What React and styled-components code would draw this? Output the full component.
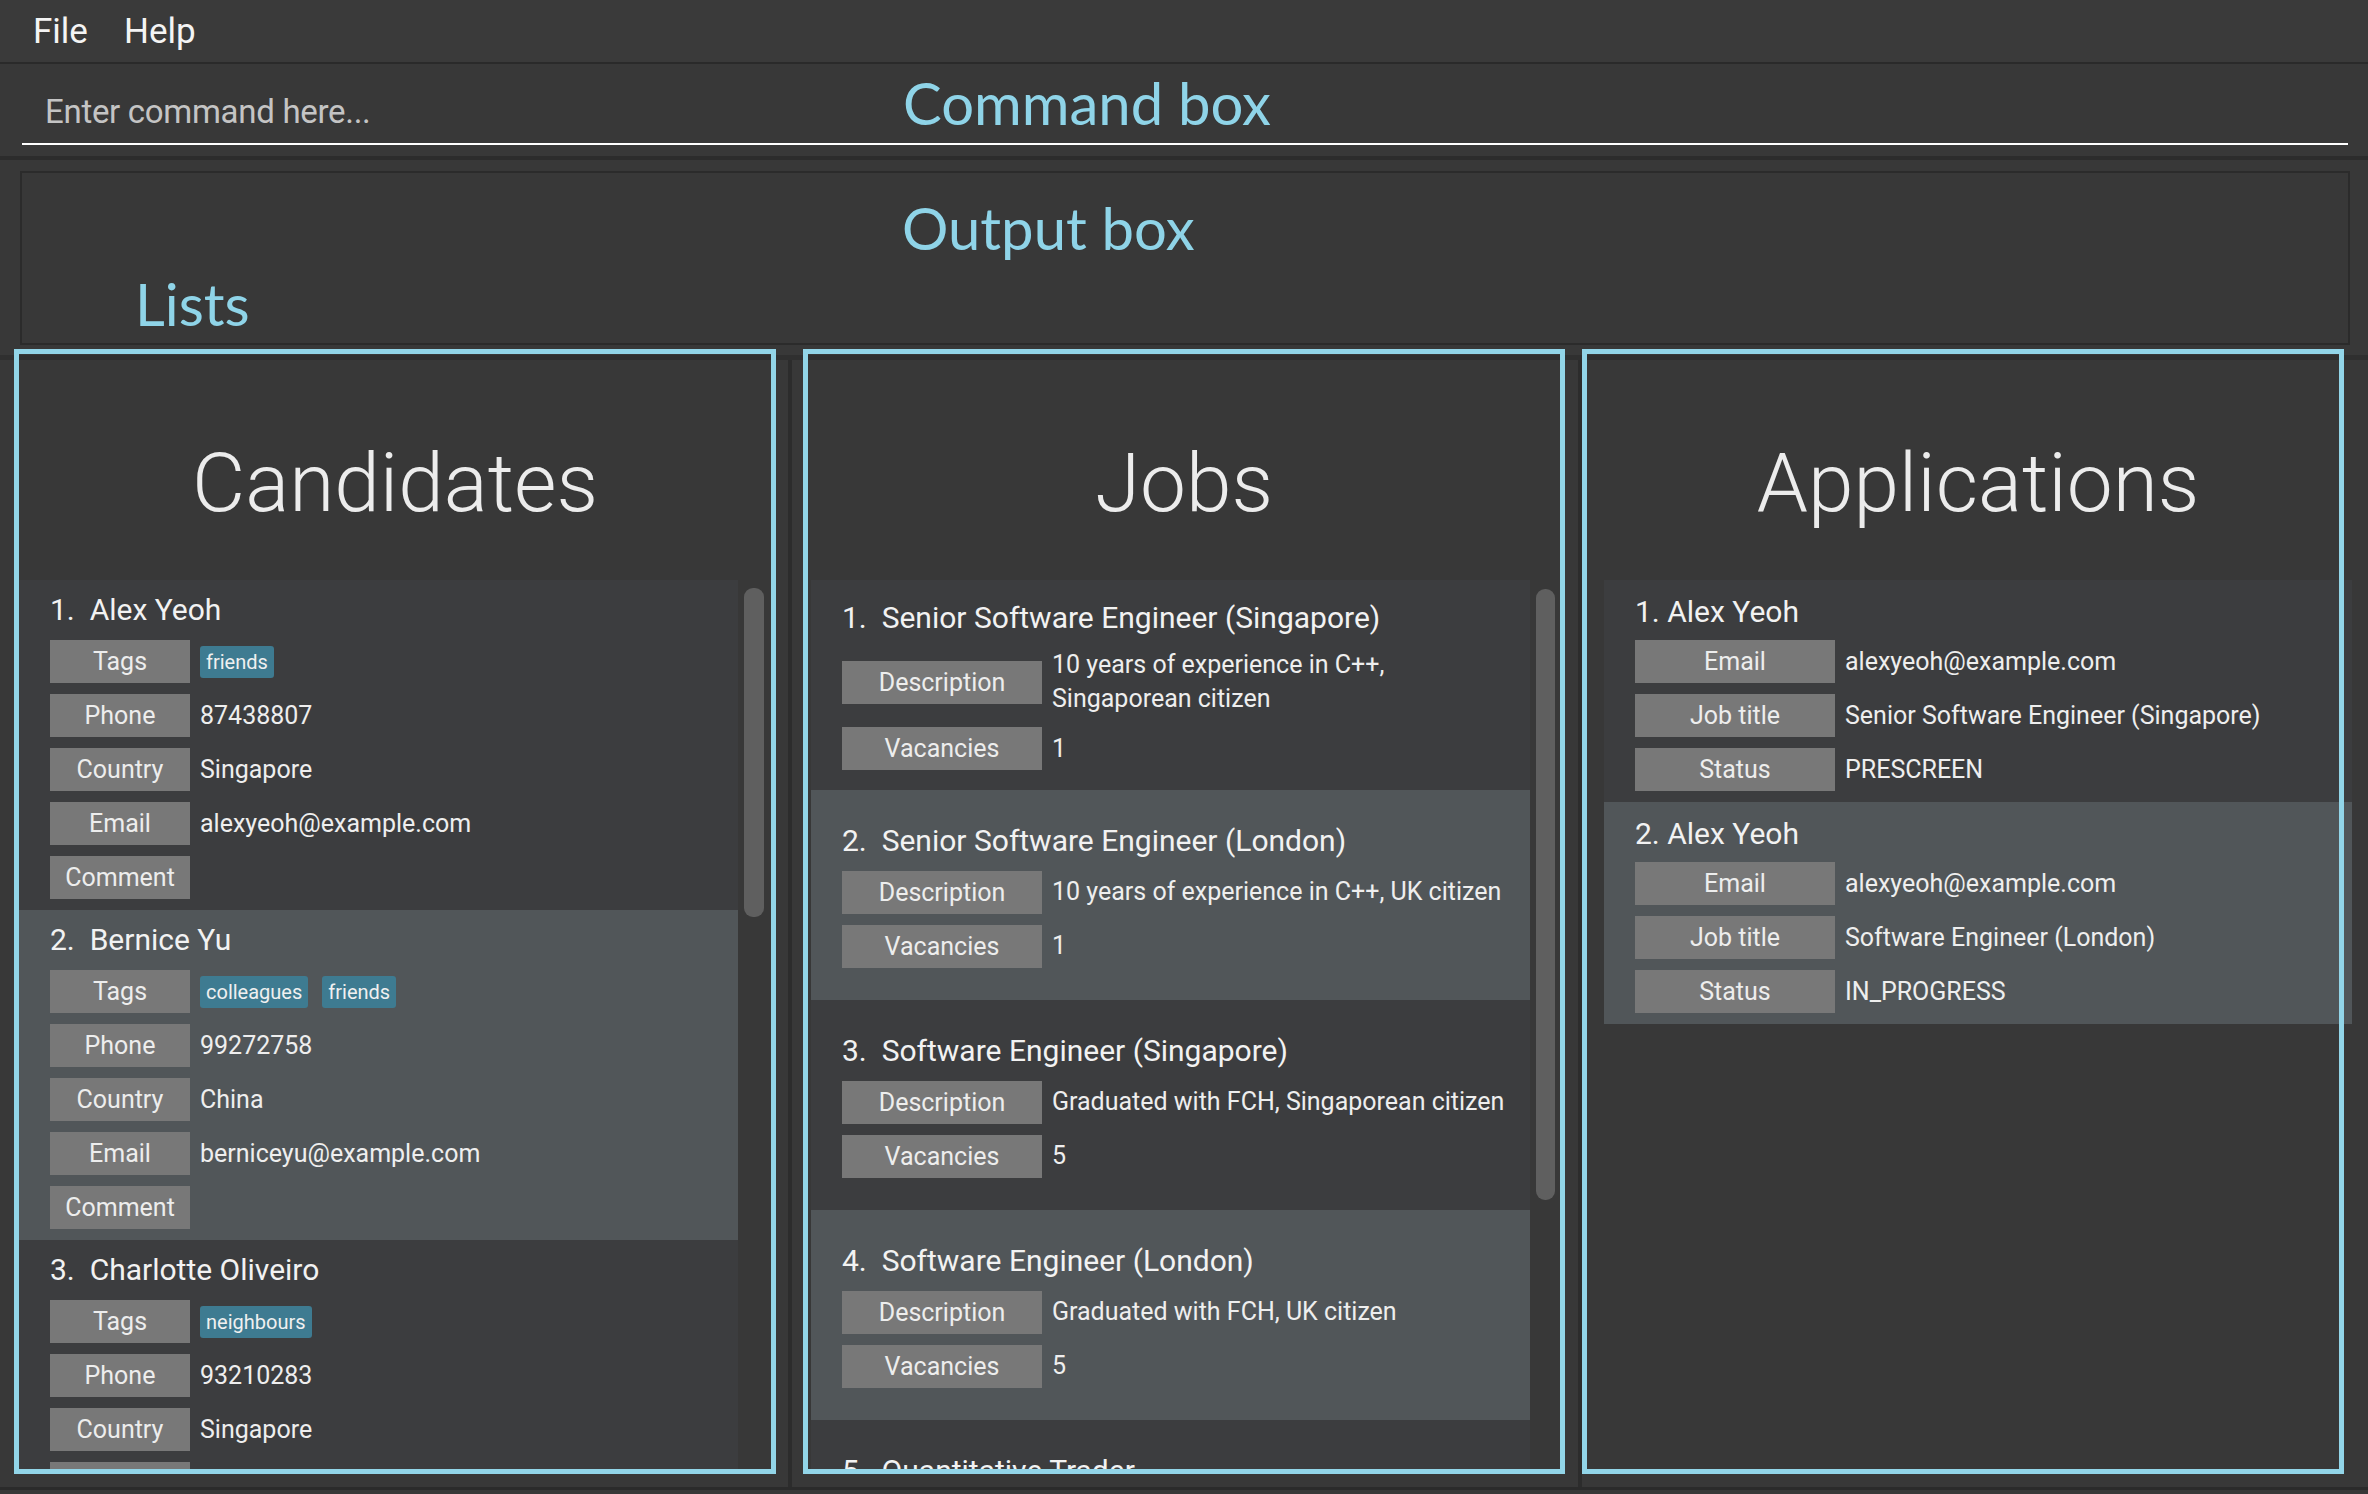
import React from 'react';
import styled, { createGlobalStyle } from 'styled-components';

const GlobalStyle = createGlobalStyle`
  html, body {
    margin: 0;
    padding: 0;
    background: #383838;
  }
  body {
    font-family: Roboto, "Liberation Sans", sans-serif;
    overflow: hidden;
  }
  * {
    box-sizing: border-box;
  }
`;

const candidates = [
  {
    name: 'Alex Yeoh',
    tags: ['friends'],
    phone: '87438807',
    country: 'Singapore',
    email: 'alexyeoh@example.com',
  },
  {
    name: 'Bernice Yu',
    tags: ['colleagues', 'friends'],
    phone: '99272758',
    country: 'China',
    email: 'berniceyu@example.com',
  },
  {
    name: 'Charlotte Oliveiro',
    tags: ['neighbours'],
    phone: '93210283',
    country: 'Singapore',
    email: 'charlotte@example.com',
  },
];

const jobs = [
  {
    title: 'Senior Software Engineer (Singapore)',
    description: '10 years of experience in C++, Singaporean citizen',
    vacancies: 1,
  },
  {
    title: 'Senior Software Engineer (London)',
    description: '10 years of experience in C++, UK citizen',
    vacancies: 1,
  },
  {
    title: 'Software Engineer (Singapore)',
    description: 'Graduated with FCH, Singaporean citizen',
    vacancies: 5,
  },
  {
    title: 'Software Engineer (London)',
    description: 'Graduated with FCH, UK citizen',
    vacancies: 5,
  },
  {
    title: 'Quantitative Trader',
    description: 'Strong mathematics background',
    vacancies: 2,
  },
];

const applications = [
  {
    name: 'Alex Yeoh',
    email: 'alexyeoh@example.com',
    job: 'Senior Software Engineer (Singapore)',
    status: 'PRESCREEN',
  },
  {
    name: 'Alex Yeoh',
    email: 'alexyeoh@example.com',
    job: 'Software Engineer (London)',
    status: 'IN_PROGRESS',
  },
];

const App = () => {
  return (
    <Window>
      <GlobalStyle />

      <MenuBar>
        <MenuItem>File</MenuItem>
        <MenuItem>Help</MenuItem>
      </MenuBar>

      <CommandBar>
        <CommandInput placeholder='Enter command here...' />
      </CommandBar>

      <OutputArea>
        <OutputBox />
      </OutputArea>

      <PanelsArea>
        <Panel>
          <PanelTitle>Candidates</PanelTitle>
          <ListArea>
            <Cells $width={719}>
              {candidates.map((c, i) => (
                <PersonCell key={c.name} $alt={i % 2 === 1}>
                  <Name>{`${i + 1}.  ${c.name}`}</Name>
                  <Rows>
                    <Row>
                      <Label $width={140}>Tags</Label>
                      <TagList>
                        {c.tags.map((t) => (
                          <Tag key={t}>{t}</Tag>
                        ))}
                      </TagList>
                    </Row>
                    <Row>
                      <Label $width={140}>Phone</Label>
                      <Value>{c.phone}</Value>
                    </Row>
                    <Row>
                      <Label $width={140}>Country</Label>
                      <Value>{c.country}</Value>
                    </Row>
                    <Row>
                      <Label $width={140}>Email</Label>
                      <Value>{c.email}</Value>
                    </Row>
                    <Row>
                      <Label $width={140}>Comment</Label>
                    </Row>
                  </Rows>
                </PersonCell>
              ))}
            </Cells>
            <ScrollGutter>
              <Thumb $top={8} $height={329} $width={20} />
            </ScrollGutter>
          </ListArea>
        </Panel>

        <Divider $left={12} $right={11} />

        <Panel>
          <PanelTitle>Jobs</PanelTitle>
          <ListArea $inset={3}>
            <Cells $width={719}>
              {jobs.map((j, i) => (
                <JobCell key={j.title} $alt={i % 2 === 1}>
                  <Name>{`${i + 1}.  ${j.title}`}</Name>
                  <Rows>
                    <Row>
                      <Label $width={200}>Description</Label>
                      <Value>{j.description}</Value>
                    </Row>
                    <Row>
                      <Label $width={200}>Vacancies</Label>
                      <Value>{j.vacancies}</Value>
                    </Row>
                  </Rows>
                </JobCell>
              ))}
            </Cells>
            <ScrollGutter>
              <Thumb $top={9} $height={611} $width={19} />
            </ScrollGutter>
          </ListArea>
        </Panel>

        <Divider $left={13} $right={0} />

        <Panel>
          <PanelTitle $shift={30}>Applications</PanelTitle>
          <ListArea $inset={17} $overhang={13}>
            <Cells>
              {applications.map((a, i) => (
                <AppCell key={a.status} $alt={i % 2 === 1}>
                  <Name>{`${i + 1}. ${a.name}`}</Name>
                  <Rows>
                    <Row>
                      <Label $width={200}>Email</Label>
                      <Value>{a.email}</Value>
                    </Row>
                    <Row>
                      <Label $width={200}>Job title</Label>
                      <Value>{a.job}</Value>
                    </Row>
                    <Row>
                      <Label $width={200}>Status</Label>
                      <Value>{a.status}</Value>
                    </Row>
                  </Rows>
                </AppCell>
              ))}
            </Cells>
          </ListArea>
        </Panel>
      </PanelsArea>

      <Annotation $left={903} $top={67}>Command box</Annotation>
      <Annotation $left={902} $top={192}>Output box</Annotation>
      <Annotation $left={135} $top={268}>Lists</Annotation>
    </Window>
  );
};

export default App;

const Window = styled.div`
  position: relative;
  width: 2368px;
  height: 1494px;
  background: #383838;
  color: #eeeeee;
  overflow: hidden;
`;

const MenuBar = styled.div`
  height: 64px;
  display: flex;
  align-items: center;
  padding-left: 15px;
  background: #3a3a3a;
  border-bottom: 2px solid #2a2a2a;
`;

const MenuItem = styled.div`
  padding: 0 18px;
  font-size: 35px;
  color: #f4f4f4;
`;

const CommandBar = styled.div`
  height: 96px;
  padding: 10px 20px 0 22px;
  border-bottom: 4px solid #2c2c2c;
`;

const CommandInput = styled.input`
  display: block;
  width: 100%;
  height: 71px;
  padding: 6px 0 0 23px;
  background: transparent;
  border: none;
  border-bottom: 2px solid #ffffff;
  outline: none;
  font-family: Roboto, "Liberation Sans", sans-serif;
  font-size: 33px;
  letter-spacing: -0.3px;
  color: #eeeeee;

  &::placeholder {
    color: #c4c4c4;
    opacity: 1;
  }
`;

const OutputArea = styled.div`
  height: 185px;
  padding: 11px 18px 0 20px;
`;

const OutputBox = styled.div`
  height: 174px;
  border: 2px solid #2b2b2b;
`;

const PanelsArea = styled.div`
  height: 1145px;
  display: flex;
  align-items: stretch;
  padding: 4px 0 0 14px;
  border-bottom: 3px solid #2b2b2b;
  background: linear-gradient(#2f2f2f, #2f2f2f) 0 10px / 100% 5px no-repeat,
    #383838;
`;

const Panel = styled.div`
  position: relative;
  width: 762px;
  height: 1125px;
  flex-shrink: 0;
  align-self: flex-start;
  display: flex;
  flex-direction: column;
  padding: 5px;
  background: linear-gradient(#2f2f2f, #2f2f2f) 0 6px / 100% 5px no-repeat,
    #383838;

  &::after {
    content: '';
    position: absolute;
    inset: 0;
    border: 5px solid #92d5e8;
    pointer-events: none;
  }
`;

const Divider = styled.div`
  width: 4px;
  flex-shrink: 0;
  margin: 11px ${(p) => p.$right}px 0 ${(p) => p.$left}px;
  background: #2c2c2c;
`;

const PanelTitle = styled.div`
  padding: 81px 0 49px ${(p) => p.$shift || 0}px;
  line-height: 96px;
  font-size: 82px;
  font-weight: 300;
  text-align: center;
  color: #ececec;
`;

const ListArea = styled.div`
  flex: 1;
  min-height: 0;
  display: flex;
  overflow: hidden;
  padding-left: ${(p) => p.$inset || 0}px;
  margin-right: ${(p) => -(p.$overhang || 0)}px;
`;

const Cells = styled.div`
  ${(p) => (p.$width ? `width: ${p.$width}px;` : 'flex: 1;')}
  flex-shrink: 0;
  display: flex;
  flex-direction: column;
`;

const ScrollGutter = styled.div`
  flex: 1;
  padding-left: 6px;
`;

const Thumb = styled.div`
  width: ${(p) => p.$width}px;
  height: ${(p) => p.$height}px;
  margin-top: ${(p) => p.$top}px;
  border-radius: 9px;
  background: #5f5f5f;
`;

const Cell = styled.div`
  flex-shrink: 0;
  padding-left: 31px;
  background: ${(p) => (p.$alt ? '#515659' : '#3c3d3f')};
`;

const PersonCell = styled(Cell)`
  padding-top: 12px;
  padding-bottom: 11px;
`;

const JobCell = styled(Cell)`
  height: 210px;
  display: flex;
  flex-direction: column;
  justify-content: center;
`;

const AppCell = styled(Cell)`
  padding-top: 14px;
  padding-bottom: 11px;

  > div:first-child {
    margin-bottom: 10px;
  }
`;

const Name = styled.div`
  line-height: 36px;
  margin-bottom: 12px;
  font-size: 30px;
  white-space: pre;
  color: #f2f2f2;
`;

const Rows = styled.div`
  display: flex;
  flex-direction: column;
  gap: 11px;
`;

const Row = styled.div`
  display: flex;
  align-items: center;
  min-height: 43px;
`;

const Label = styled.div`
  width: ${(p) => p.$width}px;
  height: 43px;
  flex-shrink: 0;
  display: flex;
  align-items: center;
  justify-content: center;
  background: #787878;
  font-size: 25px;
  color: #ededed;
`;

const Value = styled.div`
  flex: 1;
  margin-left: 10px;
  line-height: 34px;
  font-size: 25px;
  color: #eeeeee;
`;

const TagList = styled.div`
  display: flex;
  gap: 14px;
  margin-left: 10px;
`;

const Tag = styled.span`
  height: 32px;
  padding: 0 6px;
  line-height: 32px;
  border-radius: 3px;
  background: #3e7b91;
  font-size: 20px;
  color: #f0f0f0;
`;

const Annotation = styled.div`
  position: absolute;
  left: ${(p) => p.$left}px;
  top: ${(p) => p.$top}px;
  line-height: 72px;
  font-family: Lato, "Open Sans", sans-serif;
  font-size: 58px;
  color: #8fd4e8;
  white-space: nowrap;
`;
